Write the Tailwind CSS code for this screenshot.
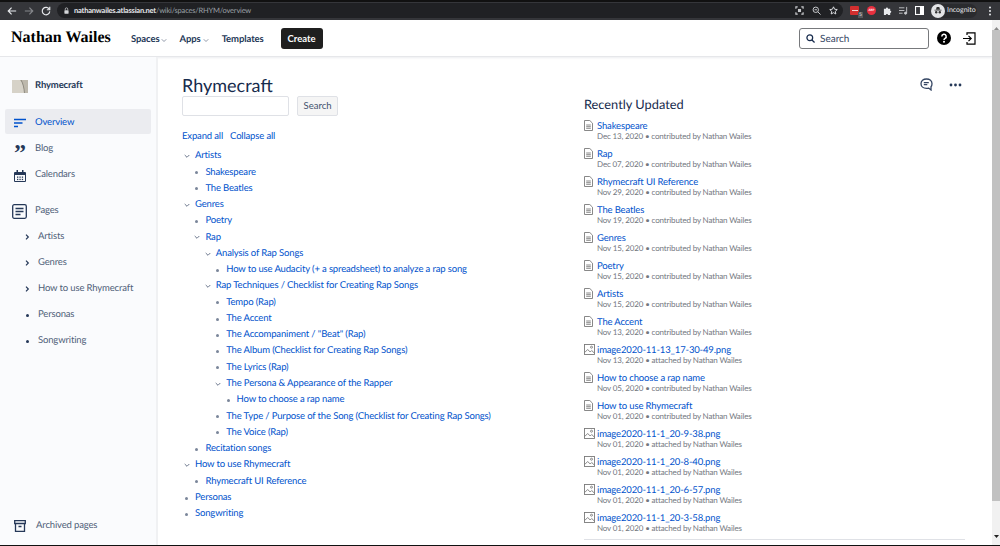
<!DOCTYPE html>
<html lang="en">
<head>
  <meta charset="UTF-8" />
  <title>Overview - Rhymecraft</title>
  <script src="https://cdn.jsdelivr.net/npm/@tailwindcss/browser@4"></script>
</head>
<body class="h-[546px] w-[1000px] overflow-hidden bg-white font-['Lato','Noto_Sans',sans-serif] text-[#172b4d] [text-rendering:geometricPrecision]">
  <div class="flex h-[546px] flex-col">
    <!-- Browser toolbar -->
    <div class="flex h-[20px] shrink-0 items-center border-t-2 border-[#111] bg-[#35363a] pr-[8px] pb-[1px] text-[#e8eaed]">
      <div class="flex w-[57px] items-center justify-around px-[3px]">
        <svg class="h-[10px] w-[10px]" viewBox="0 0 12 12" fill="none" stroke="#e8eaed" stroke-width="1.4"><path d="M11 6H1.5M5.5 2 1.5 6l4 4"/></svg>
        <svg class="h-[10px] w-[10px]" viewBox="0 0 12 12" fill="none" stroke="#85878b" stroke-width="1.4"><path d="M1 6h9.5M6.5 2l4 4-4 4"/></svg>
        <svg class="h-[10px] w-[10px]" viewBox="0 0 12 12" fill="none" stroke="#e8eaed" stroke-width="1.4"><path d="M10 4a4.5 4.5 0 1 0 .5 2.5"/><path d="M10.5 1v3.5H7" /></svg>
      </div>
      <div class="flex h-[15px] w-[786px] items-center rounded-full bg-[#202124] pl-[6px] text-[7.500px] leading-none tracking-[-0.2px]">
        <svg class="mr-[4px] h-[7px] w-[7px]" viewBox="0 0 10 10" fill="#d5d7da"><rect x="2" y="4.5" width="6" height="5" rx=".7"/><path d="M3.2 4.500V3a1.800 1.800 0 0 1 3.600 0v1.500" fill="none" stroke="#d5d7da"/></svg>
        <span class="font-bold text-[#e8eaed]">nathanwailes.atlassian.net</span><span class="text-[#9aa0a6]">/wiki/spaces/RHYM/overview</span>
        <div class="ml-auto flex items-center gap-[8px] pr-[5px]">
          <svg class="h-[9px] w-[9px]" viewBox="0 0 10 10" fill="none" stroke="#c8cacd" stroke-width="1.3"><path d="M1 3V1h2M7 1h2v2M9 7v2H7M3 9H1V7"/><rect x="3.3" y="3.3" width="3.4" height="3.4" fill="#c8cacd" stroke="none"/></svg>
          <svg class="h-[9px] w-[9px]" viewBox="0 0 10 10" fill="none" stroke="#c8cacd" stroke-width="1.1"><circle cx="4.2" cy="4.2" r="3"/><path d="m6.5 6.5 3 3M2.800 4.200h2.800"/></svg>
          <svg class="h-[9px] w-[9px]" viewBox="0 0 10 10" fill="none" stroke="#e8eaed" stroke-width="1"><path d="m5 .9 1.250 2.700 2.950.350-2.200 2 .6 2.950L5 7.400 2.400 8.900l.6-2.950-2.200-2 2.950-.350z"/></svg>
        </div>
      </div>
      <div class="ml-[7px] flex flex-1 items-center gap-[7px]">
        <div class="relative flex h-[9px] w-[9px] items-center justify-center rounded-[1px] bg-[#d32f2f]"><span class="h-[1px] w-[6px] bg-white/80"></span><span class="absolute -right-[4px] -bottom-[3px] bg-[#55575a] px-[1px] text-[5px] leading-[6px]">5</span></div>
        <div class="ml-[1px] flex h-[9px] w-[9px] items-center justify-center rounded-full bg-[#e8303f] text-[3px] font-bold leading-none text-white">ABP</div>
        <svg class="h-[9px] w-[9px]" viewBox="0 0 10 10" fill="#e8eaed"><path d="M1 3h2.200a1.200 1.200 0 0 1 2.400 0H8v2.300a1.200 1.200 0 0 1 0 2.400V10H5.600a1.200 1.200 0 0 0-2.400 0H1z"/></svg>
        <svg class="h-[9px] w-[9px]" viewBox="0 0 10 10" fill="none" stroke="#c8cacd"><path d="M0 2h6M0 5h6M0 8h4"/><path d="M8.500 1v7"/><circle cx="7.300" cy="8" r="1.200" fill="#c8cacd"/></svg>
        <svg class="h-[9px] w-[9px]" viewBox="0 0 10 10"><rect x=".6" y=".6" width="8.800" height="8.800" fill="none" stroke="#fff" stroke-width="1.200"/><rect x="5.500" y="1" width="4" height="8" fill="#fff"/></svg>
        <div class="flex h-[14px] w-[46px] items-center gap-[2px] rounded-full bg-[#2a2b2e] text-[7px] leading-none"><span class="flex h-[14px] w-[14px] shrink-0 items-center justify-center rounded-full bg-[#e3e4e6]"><svg class="h-[10px] w-[10px]" viewBox="0 0 10 10" fill="#333"><path d="M3 3.500 3.700 1h2.600L7 3.500zM1.500 3.700h7v.7h-7z"/><circle cx="3.200" cy="6.300" r="1.200"/><circle cx="6.800" cy="6.300" r="1.200"/></svg></span>Incognito</div>
        <svg class="ml-auto h-[10px] w-[4px]" viewBox="0 0 4 10" fill="#e8eaed"><circle cx="2" cy="1.500" r="1"/><circle cx="2" cy="5" r="1"/><circle cx="2" cy="8.500" r="1"/></svg>
      </div>
    </div>

    <div class="flex min-h-0 flex-1">
      <div class="flex min-w-0 flex-1 flex-col">
        <!-- Confluence header -->
        <header class="flex h-[37px] shrink-0 items-center border-b border-[#e6e7ea] bg-white shadow-[0_1px_2px_rgba(9,30,66,0.08)]">
          <div class="ml-[11px] w-[120px] font-['Liberation_Serif',serif] text-[16px] font-bold leading-none text-black">Nathan Wailes</div>
          <nav class="flex items-center pt-[4px] text-[9.500px] font-bold tracking-[-0.1px] text-[#253858]">
            <span>Spaces</span>
            <svg class="mr-[12px] ml-[2px] h-[6px] w-[6px]" viewBox="0 0 8 8" fill="none" stroke="#6b778c" stroke-width="1"><path d="m1 3 3 3 3-3"/></svg>
            <span>Apps</span>
            <svg class="mr-[13px] ml-[2px] h-[6px] w-[6px]" viewBox="0 0 8 8" fill="none" stroke="#6b778c" stroke-width="1"><path d="m1 3 3 3 3-3"/></svg>
            <span>Templates</span>
          </nav>
          <button class="ml-[17px] h-[21px] w-[42px] rounded-[3px] bg-[#1f1f1f] pt-[2px] text-[9.500px] font-bold text-white">Create</button>
          <div class="ml-auto flex h-[21px] w-[130px] items-center rounded-[3px] border border-[#77797c] pl-[6px] text-[10px] text-[#344563]">
            <svg class="mr-[5px] h-[9px] w-[9px]" viewBox="0 0 10 10" fill="none" stroke="#172b4d" stroke-width="1.400"><circle cx="4.200" cy="4.200" r="3.200"/><path d="m6.600 6.600 2.900 2.900"/></svg>
            <span class="pt-[3px]">Search</span>
          </div>
          <svg class="ml-[8px] h-[14px] w-[14px]" viewBox="0 0 14 14"><circle cx="7" cy="7" r="7" fill="#000"/><path d="M4.800 5.400a2.200 2.200 0 1 1 3.300 1.900c-.8.5-1.100.8-1.100 1.600" fill="none" stroke="#fff" stroke-width="1.500"/><circle cx="7" cy="10.800" r="1" fill="#fff"/></svg>
          <svg class="mr-[16px] ml-[12px] h-[13px] w-[13px]" viewBox="0 0 13 13" fill="none" stroke="#000" stroke-width="1.200"><path d="M4 3V.8h8v11.400H4V10"/><path d="M0 6.500h8M5.500 3.800l2.700 2.700-2.700 2.700"/></svg>
        </header>

        <div class="flex min-h-0 flex-1">
          <!-- Left sidebar -->
          <aside class="flex w-[158px] shrink-0 flex-col border-r-2 border-[#f0f1f3] bg-[#fafbfd] text-[9.500px] tracking-[-0.15px] text-[#505f79]">
            <div class="flex h-[52px] items-center pt-[6px] pl-[12px] font-bold text-[#253858]">
              <svg class="mr-[7px] h-[13px] w-[16px]" viewBox="0 0 16 13"><rect width="16" height="13" fill="#d6d2c8"/><path d="M8 0c3 3 4 8 4.500 13H16V0z" fill="#bdb8ac"/><path d="M9 0c2 3 3 8 3.500 13" stroke="#77736a" fill="none" stroke-width=".7"/></svg>
              Rhymecraft
            </div>
            <a class="mx-[5px] flex h-[25px] items-center rounded-[2px] bg-[#ebecf0] pt-[3px] pl-[9px] text-[#0052cc]">
              <svg class="mr-[9px] h-[10px] w-[12px]" viewBox="0 0 12 10" fill="none" stroke="#0052cc" stroke-width="1.300"><path d="M0 1.500h12M0 5h8.500M0 8.500h4"/></svg>
              Overview
            </a>
            <a class="mx-[5px] mt-[1px] flex h-[25px] items-center pt-[4px] pl-[9px]">
              <span class="mr-[10px] h-[11px] w-[11px] font-['Liberation_Serif',serif] text-[24px] leading-[21px] font-bold text-[#253858]">”</span>
              Blog
            </a>
            <a class="mx-[5px] mt-[1px] flex h-[25px] items-center pt-[4px] pl-[9px]">
              <svg class="mr-[9px] h-[12px] w-[12px]" viewBox="0 0 12 12" fill="#253858"><path d="M1 2h10a1 1 0 0 1 1 1v8a1 1 0 0 1-1 1H1a1 1 0 0 1-1-1V3a1 1 0 0 1 1-1zm0 3v6h10V5z" fill-rule="evenodd"/><rect x="2.500" y="0" width="1.500" height="3"/><rect x="8" y="0" width="1.500" height="3"/><rect x="3" y="6.500" width="1.300" height="1.300"/><rect x="5.400" y="6.500" width="1.300" height="1.300"/><rect x="7.800" y="6.500" width="1.300" height="1.300"/><rect x="3" y="8.800" width="1.300" height="1.300"/><rect x="5.400" y="8.800" width="1.300" height="1.300"/><rect x="7.800" y="8.800" width="1.300" height="1.300"/></svg>
              Calendars
            </a>
            <div class="mt-[12px] flex h-[25px] items-center pt-[2px] pl-[12px]">
              <svg class="mr-[8px] h-[15px] w-[15px]" viewBox="0 0 15 15" fill="none" stroke="#253858" stroke-width="1.300"><rect x=".7" y=".7" width="13.600" height="13.600" rx="1.500"/><path d="M3.500 4.500h8M3.500 7.500h8M3.500 10.500h5"/></svg>
              Pages
            </div>
            <ul id="pageNav"></ul>
            <div class="mt-auto mb-[10px] flex h-[20px] items-center pt-[2px] pl-[14px]">
              <svg class="mr-[10px] h-[12px] w-[12px]" viewBox="0 0 12 12" fill="none" stroke="#253858" stroke-width="1.300"><path d="M.7.700h10.600v2.800H.7zM1.500 3.500v7.800h9V3.500M4.500 6.500h3"/></svg>
              Archived pages
            </div>
          </aside>

          <!-- Page content -->
          <main class="relative flex min-w-0 flex-1 pl-[24px]">
            <section class="w-[402px] shrink-0">
              <h1 class="mt-[18px] text-[18px] leading-[21px] font-normal text-[#172b4d]">Rhymecraft</h1>
              <div class="flex items-center">
                <div class="h-[20px] w-[107px] rounded-[2px] border border-[#dfe1e6] bg-white"></div>
                <button class="ml-[8px] h-[20px] w-[41px] rounded-[2px] border border-[#dfe1e6] bg-[#f5f5f5] text-[9.500px] text-[#42526e]">Search</button>
              </div>
              <div class="mt-[14px] flex gap-[7px] text-[9.500px] leading-[14px] tracking-[-0.15px] text-[#0052cc]"><a>Expand all</a><a>Collapse all</a></div>
              <ul id="pageTree" class="mt-[4.300px] text-[9.500px] leading-[16.270px] tracking-[-0.15px] text-[#0052cc]"></ul>
            </section>
            <section class="w-[390px]">
              <h2 class="mt-[38px] text-[12.800px] leading-[18px] font-normal text-[#172b4d]">Recently Updated</h2>
              <ul id="recentList" class="mt-[6px]"></ul>
              <div class="h-px w-[381px] bg-[#dfe1e6]"></div>
            </section>
            <div class="absolute top-[21px] right-[30px] flex items-center gap-[16px]">
              <svg class="h-[13px] w-[13px]" viewBox="0 0 13 13" fill="none" stroke="#344563" stroke-width="1.300"><path d="M6.500 1C3.200 1 1 3 1 5.700s2.200 4.700 5.500 4.700c.8 0 1.500-.1 2.200-.3L11 12V8.800c.8-.8 1-2 1-3.100C12 3 9.800 1 6.500 1z"/><path d="M3.800 4.700h5M3.800 6.700h3.500"/></svg>
              <svg class="h-[4px] w-[13px]" viewBox="0 0 13 4" fill="#253858"><circle cx="2" cy="2" r="1.400"/><circle cx="6.500" cy="2" r="1.400"/><circle cx="11" cy="2" r="1.400"/></svg>
            </div>
          </main>
        </div>
      </div>

      <!-- Window scrollbar -->
      <div class="flex h-full w-[8px] shrink-0 flex-col bg-[#f1f1f1]">
        <div class="flex h-[10px] shrink-0 items-end justify-center"><svg class="h-[3px] w-[5px]" viewBox="0 0 5 3" fill="#8a8a8a"><path d="M2.500 0 5 3H0z"/></svg></div>
        <div class="h-[471px] shrink-0 bg-[#c1c1c1]"></div>
        <div class="mt-auto flex h-[10px] shrink-0 items-start justify-center"><svg class="h-[3px] w-[5px]" viewBox="0 0 5 3" fill="#222"><path d="M0 0h5L2.500 3z"/></svg></div>
      </div>
    </div>
    <div class="h-px shrink-0 bg-[#111]"></div>
  </div>

  <script>
    const sidebarPages = [
      { name: 'Artists', kids: true },
      { name: 'Genres', kids: true },
      { name: 'How to use Rhymecraft', kids: true },
      { name: 'Personas' },
      { name: 'Songwriting' },
    ];

    document.getElementById('pageNav').innerHTML = sidebarPages.map(p => `
      <li class="flex h-[26px] items-center pt-[2px] pl-[25px]">
        <span class="flex w-[13px] items-center">${p.kids
          ? '<svg class="h-[6px] w-[5px]" viewBox="0 0 5 6" fill="none" stroke="#253858" stroke-width="1.200"><path d="m1 .7 2.300 2.300L1 5.300"/></svg>'
          : '<span class="ml-[1px] h-[3px] w-[3px] rounded-full bg-[#253858]"></span>'}</span>
        ${p.name}
      </li>`).join('');

    const tree = [
      ['Artists', [['Shakespeare'], ['The Beatles']]],
      ['Genres', [
        ['Poetry'],
        ['Rap', [
          ['Analysis of Rap Songs', [['How to use Audacity (+ a spreadsheet) to analyze a rap song']]],
          ['Rap Techniques / Checklist for Creating Rap Songs', [
            ['Tempo (Rap)'],
            ['The Accent'],
            ['The Accompaniment / "Beat" (Rap)'],
            ['The Album (Checklist for Creating Rap Songs)'],
            ['The Lyrics (Rap)'],
            ['The Persona & Appearance of the Rapper', [['How to choose a rap name']]],
            ['The Type / Purpose of the Song (Checklist for Creating Rap Songs)'],
            ['The Voice (Rap)'],
          ]],
        ]],
        ['Recitation songs'],
      ]],
      ['How to use Rhymecraft', [['Rhymecraft UI Reference']]],
      ['Personas'],
      ['Songwriting'],
    ];

    function renderTree(items) {
      return items.map(([name, kids]) => `
        <li>
          <div class="flex items-center">
            <span class="flex w-[13px] shrink-0 items-center pl-[2px]">${kids
              ? '<svg class="h-[5px] w-[6px]" viewBox="0 0 6 5" fill="none" stroke="#6b778c" stroke-width="1"><path d="m.7 1 2.300 2.300L5.300 1"/></svg>'
              : '<span class="ml-[1px] h-[3px] w-[3px] rounded-full bg-[#7a869a]"></span>'}</span>
            <a>${name.replace('&', '&amp;')}</a>
          </div>
          ${kids ? `<ul class="pl-[10.400px]">${renderTree(kids)}</ul>` : ''}
        </li>`).join('');
    }
    document.getElementById('pageTree').innerHTML = renderTree(tree);

    const recent = [
      ['Shakespeare', 'Dec 13, 2020'],
      ['Rap', 'Dec 07, 2020'],
      ['Rhymecraft UI Reference', 'Nov 29, 2020'],
      ['The Beatles', 'Nov 19, 2020'],
      ['Genres', 'Nov 15, 2020'],
      ['Poetry', 'Nov 15, 2020'],
      ['Artists', 'Nov 15, 2020'],
      ['The Accent', 'Nov 13, 2020'],
      ['image2020-11-13_17-30-49.png', 'Nov 13, 2020', true],
      ['How to choose a rap name', 'Nov 05, 2020'],
      ['How to use Rhymecraft', 'Nov 01, 2020'],
      ['image2020-11-1_20-9-38.png', 'Nov 01, 2020', true],
      ['image2020-11-1_20-8-40.png', 'Nov 01, 2020', true],
      ['image2020-11-1_20-6-57.png', 'Nov 01, 2020', true],
      ['image2020-11-1_20-3-58.png', 'Nov 01, 2020', true],
    ];

    const pageIcon = '<svg class="mt-[1px] h-[11px] w-[9px]" viewBox="0 0 9 11" fill="none" stroke="#7a7a7a" stroke-width=".9"><path d="M.5.500h5.300L8.500 3.200v7.300H.5z"/><path d="M2.200 5h4.600M2.200 6.700h4.600M2.200 8.300h4.600"/></svg>';
    const imageIcon = '<svg class="mt-[1px] h-[11px] w-[11px]" viewBox="0 0 11 11" fill="none" stroke="#7a7a7a" stroke-width=".9"><rect x=".5" y=".5" width="10" height="10"/><path d="m.7 8.500 3-3 2.500 2.500 1.500-1.500 2.600 2.500"/><circle cx="7.500" cy="3.200" r="1"/></svg>';

    document.getElementById('recentList').innerHTML = recent.map(([name, date, attached]) => `
      <li class="flex h-[28px]">
        <span class="w-[13px] shrink-0">${attached ? imageIcon : pageIcon}</span>
        <div class="pt-[2px] tracking-[-0.15px]">
          <a class="block text-[9.500px] leading-[12px] text-[#0052cc]">${name}</a>
          <div class="-mt-[1px] text-[8px] leading-[8px] text-[#74787f]">${date} • ${attached ? 'attached' : 'contributed'} by Nathan Wailes</div>
        </div>
      </li>`).join('');
  </script>
</body>
</html>
